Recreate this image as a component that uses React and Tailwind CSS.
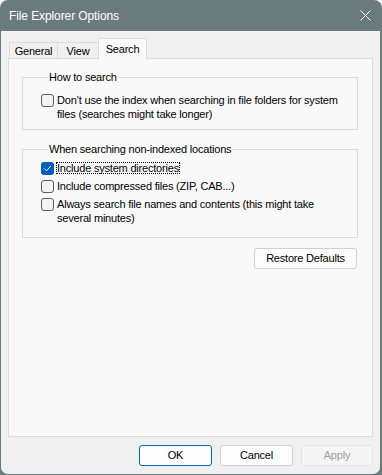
import { useState } from "react"

const font = { fontFamily: '"Liberation Sans", Arial, sans-serif' }

function Checkbox({ checked }) {
  if (checked) {
    return (
      <span className="mt-[1px] flex h-[13px] w-[13px] shrink-0 items-center justify-center rounded-[3px] bg-[#005fb8]">
        <svg width="9" height="9" viewBox="0 0 9 9" fill="none">
          <path d="M1.5 4.8 L3.5 6.8 L7.6 2.3" stroke="#ffffff" strokeWidth="1" strokeLinecap="round" strokeLinejoin="round" />
        </svg>
      </span>
    )
  }
  return (
    <span className="mt-[1px] block h-[13px] w-[13px] shrink-0 rounded-[3px] border border-[#5c5c5c] bg-[#f3f3f3]" />
  )
}

function Option({ checked, focused, children }) {
  return (
    <div className="flex items-start gap-[3px]">
      <Checkbox checked={checked} />
      <div className="leading-[14px]">
        {focused ? (
          <span className="inline-block border border-dotted border-black leading-[10px] -ml-px">{children}</span>
        ) : (
          <span className="block">{children}</span>
        )}
      </div>
    </div>
  )
}

function Group({ title, children, className }) {
  return (
    <fieldset className={`border border-[#dcdcdc] ${className}`}>
      <legend className="ml-[7px] px-[1px] leading-[13px]">{title}</legend>
      {children}
    </fieldset>
  )
}

export default function App() {
  const [tab] = useState("Search")

  return (
    <div
      className="flex h-[475px] w-[382px] flex-col overflow-hidden rounded-t-[8px] bg-[#6b7b7d] text-[11px] tracking-[-0.2px] text-black"
      style={font}
    >
      {/* title bar */}
      <div className="flex h-[31px] shrink-0 items-center justify-between pl-[9px] pr-[11px] text-[12px] tracking-[-0.1px] text-white">
        <span>File Explorer Options</span>
        <svg width="11" height="11" viewBox="0 0 11 11">
          <path d="M0.5 0.5 L10.5 10.5 M10.5 0.5 L0.5 10.5" stroke="#ffffff" strokeWidth="1" />
        </svg>
      </div>

      {/* body */}
      <div className="mb-[1px] ml-[1px] mr-[2px] flex flex-1 flex-col rounded-b-[7px] bg-[#f0f0f0] px-[7px] pt-[7px] pb-[8px]">
        {/* tabs */}
        <div className="relative z-10 -mb-[1px] flex h-[21px] items-end pl-[1px]">
          <div className="flex h-[17px] w-[48px] items-center justify-center border-l border-t border-[#dcdcdc]">General</div>
          <div className="flex h-[17px] w-[41px] items-center justify-center border-l border-t border-[#dcdcdc]">View</div>
          <div className="flex h-[21px] w-[49px] items-start justify-center border-x border-t border-[#dcdcdc] bg-[#f9f9f9] pt-[2px]">
            {tab}
          </div>
        </div>

        {/* panel */}
        <div className="flex flex-1 flex-col border border-[#dcdcdc] bg-[#f9f9f9] pl-[13px] pr-[14px] pt-[12px]">
          <Group title="How to search" className="pl-[18px] pt-[9px] pb-[8px]">
            <Option>
              Don’t use the index when searching in file folders for system
              <br />
              files (searches might take longer)
            </Option>
          </Group>

          <Group title="When searching non-indexed locations" className="mt-[13px] flex flex-col gap-[4px] pl-[18px] pt-[5px] pb-[12px]">
            <Option checked focused>Include system directories</Option>
            <Option>Include compressed files (ZIP, CAB...)</Option>
            <Option>
              Always search file names and contents (this might take
              <br />
              several minutes)
            </Option>
          </Group>

          <div className="mt-[10px] flex justify-end pr-[1px]">
            <button className="h-[21px] w-[103px] rounded-[3px] border border-[#d0d0d0] bg-[#fdfdfd]">Restore Defaults</button>
          </div>
        </div>

        {/* footer buttons */}
        <div className="mt-[8px] flex justify-end gap-[8px]">
          <button className="h-[21px] w-[73px] rounded-[3px] border border-[#0067c0] bg-[#fdfdfd]">OK</button>
          <button className="h-[21px] w-[73px] rounded-[3px] border border-[#d0d0d0] bg-[#fdfdfd]">Cancel</button>
          <button className="h-[21px] w-[72px] rounded-[3px] border border-[#e5e5e5] bg-[#f5f5f5] text-[#a0a0a0]">Apply</button>
        </div>
      </div>
    </div>
  )
}
